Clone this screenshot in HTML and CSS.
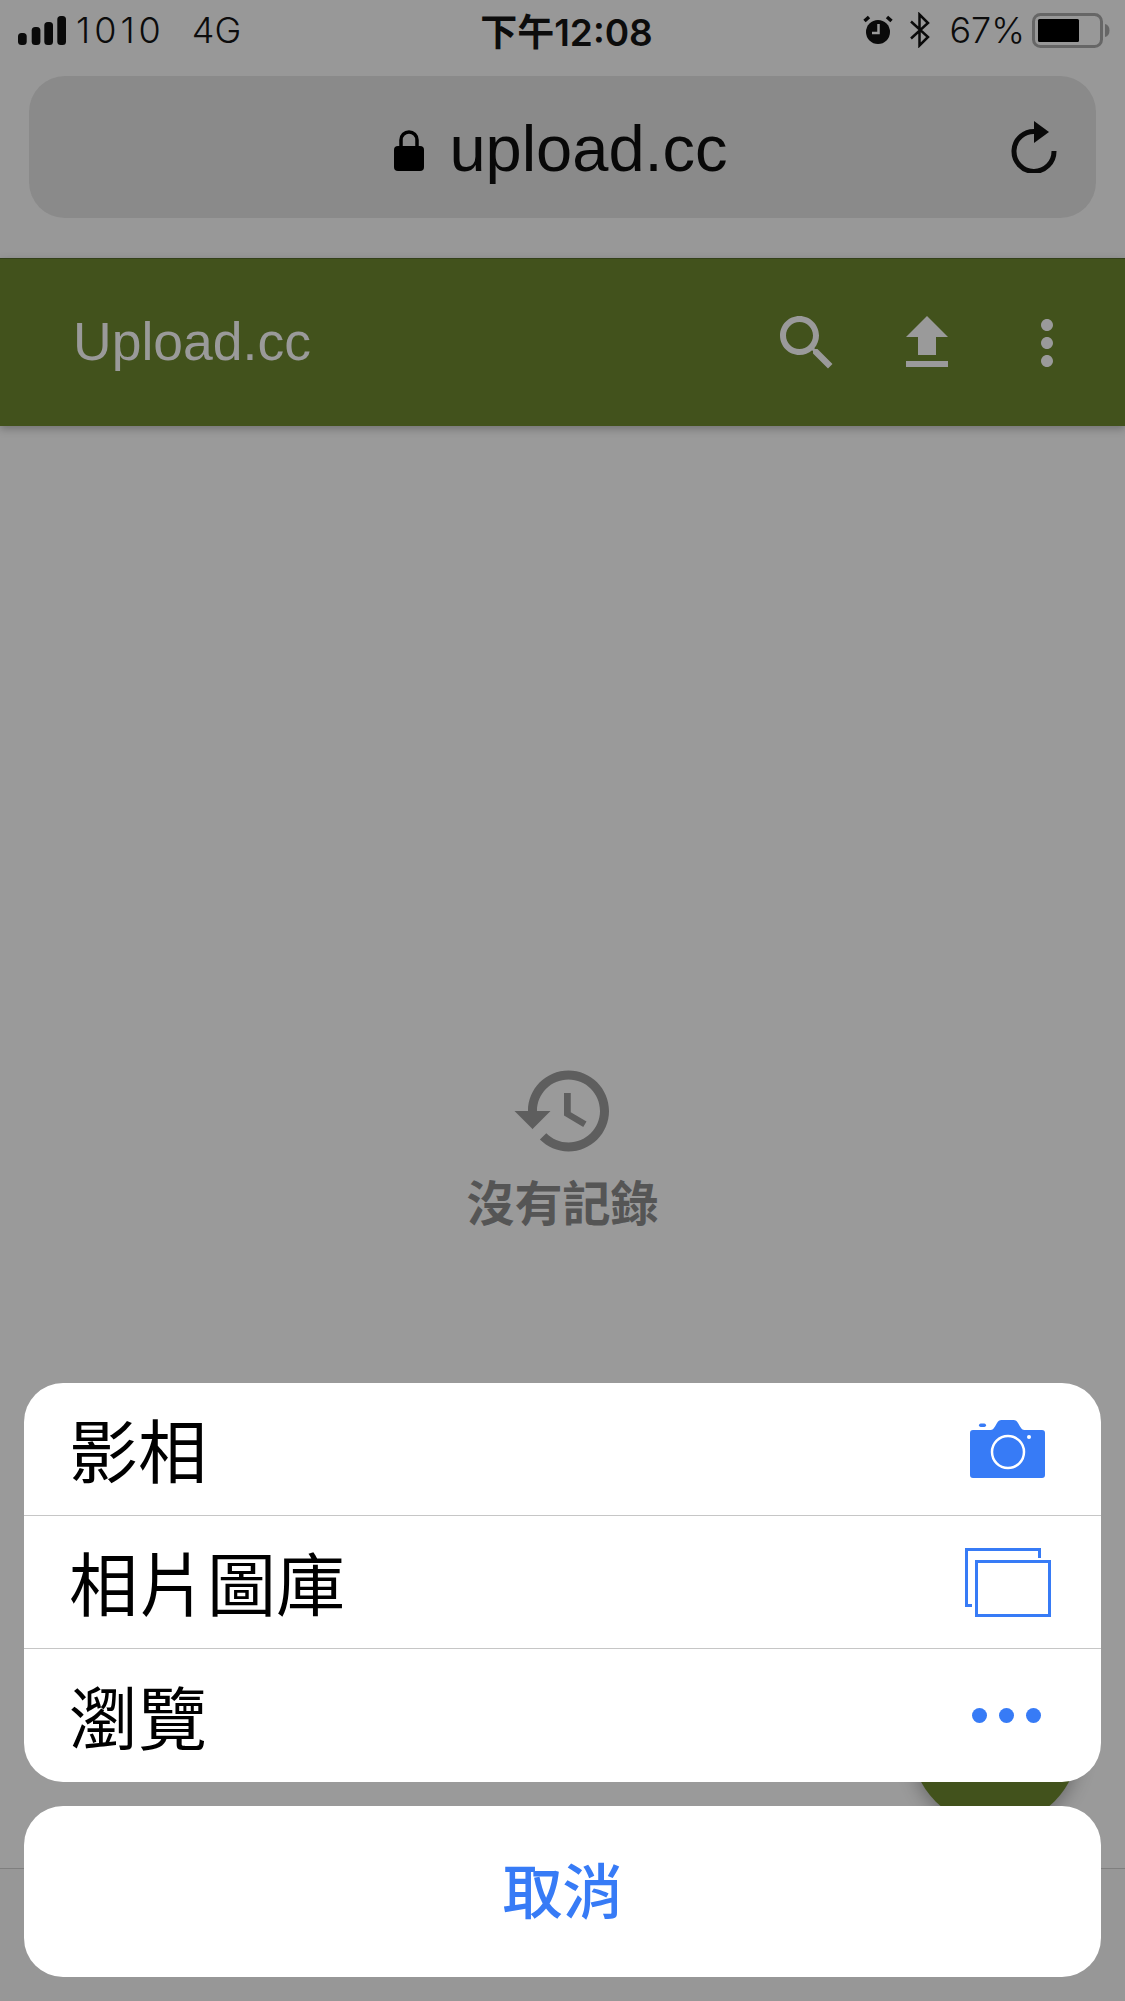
FILE: index.html
```html
<!DOCTYPE html>
<html lang="zh-Hant">
<head>
<meta charset="utf-8">
<title>Upload.cc</title>
<link rel="stylesheet" href="styles.css">
</head>
<body>
<div class="page">
  <div class="browser">
    <div class="status">
      <div class="status-left">
        <svg class="signal" viewBox="0 0 48 29" width="48" height="29"><rect x="0" y="17" width="8.7" height="12" rx="3.5"/><rect x="13.7" y="11" width="8.7" height="18" rx="3.5"/><rect x="26.3" y="6" width="8.7" height="23" rx="3.5"/><rect x="39.3" y="0" width="8.7" height="29" rx="3.5"/></svg>
        <span class="carrier">1010</span>
        <span class="network">4G</span>
      </div>
      <div class="time">下午12:08</div>
      <div class="status-right">
        <svg class="alarm" viewBox="0 0 30 30" width="30" height="30"><circle cx="15" cy="17" r="12"/><path class="alarm-hands" d="M15.5 9v9H9"/><path class="alarm-bells" d="M1.5 6 6 2M28.500 6 24 2"/></svg>
        <svg class="bt" viewBox="0 0 22 36" width="22" height="36"><path d="M2 9.500 19 25 10.500 33.500V2.500L19 11 2 26.500"/></svg>
        <span class="percent">67%</span>
        <svg class="battery" viewBox="0 0 78 35" width="78" height="35"><rect class="batt-shell" x="1.500" y="1.500" width="68" height="32" rx="7"/><rect x="6" y="6" width="41" height="23" rx="1.500"/><path class="batt-nub" d="M73 11c3 .6 4.500 3 4.500 6.500S76 23.400 73 24z"/></svg>
      </div>
    </div>
    <div class="address">
      <div class="address-main">
        <svg class="lock" viewBox="0 0 32 41" width="32" height="41"><path class="lock-shackle" d="M8 19V10a8 8 0 0 1 16 0v9"/><rect x="1" y="16" width="30" height="25" rx="4"/></svg>
        <span class="host">upload.cc</span>
      </div>
      <svg class="reload" viewBox="0 0 46 52" width="46" height="52"><path class="reload-arc" d="M25 10.500A20 20 0 1 0 43 30"/><path d="M23 0 38 11 23 22z"/></svg>
    </div>
  </div>
  <header class="appbar">
    <div class="brand">Upload.cc</div>
    <div class="actions">
      <svg class="icon" viewBox="0 0 24 24" width="72" height="72"><path d="M15.5 14h-.79l-.28-.27C15.41 12.59 16 11.11 16 9.500 16 5.910 13.090 3 9.500 3S3 5.910 3 9.500 5.910 16 9.500 16c1.610 0 3.090-.59 4.230-1.570l.27.28v.79l5 4.990L20.490 19l-4.990-5zm-6 0C7.010 14 5 11.990 5 9.500S7.010 5 9.500 5 14 7.010 14 9.500 11.990 14 9.500 14z"/></svg>
      <svg class="icon" viewBox="0 0 24 24" width="72" height="72"><path d="M9 16h6v-6h4l-7-7-7 7h4zm-4 2h14v2H5z"/></svg>
      <svg class="icon" viewBox="0 0 24 24" width="72" height="72"><path d="M12 8c1.100 0 2-.9 2-2s-.9-2-2-2-2 .9-2 2 .9 2 2 2zm0 2c-1.100 0-2 .9-2 2s.9 2 2 2 2-.9 2-2-.9-2-2-2zm0 6c-1.100 0-2 .9-2 2s.9 2 2 2 2-.9 2-2-.9-2-2-2z"/></svg>
    </div>
  </header>
  <main class="content">
    <svg class="history" viewBox="0 0 24 24" width="108" height="108"><path d="M13 3c-4.970 0-9 4.030-9 9H1l3.890 3.890.07.14L9 12H6c0-3.870 3.130-7 7-7s7 3.130 7 7-3.130 7-7 7c-1.930 0-3.680-.79-4.940-2.060l-1.420 1.420C8.270 19.990 10.510 21 13 21c4.970 0 9-4.030 9-9s-4.030-9-9-9zm-1 5v5l4.280 2.540.72-1.210-3.500-2.080V8H12z"/></svg>
    <div class="empty">沒有記錄</div>
  </main>
  <footer class="footer"></footer>
  <div class="fab"></div>
  <div class="sheet">
    <div class="menu">
      <div class="row">
        <span class="label">影相</span>
        <span class="row-icon">
          <svg class="cam" viewBox="0 0 75 58" width="75" height="58"><path class="blue" d="M3 10h17.500c2 0 3-1 4.500-3.500L27 3c1-1.800 2.500-3 4.500-3h12c2 0 3.500 1.200 4.500 3l2 3.500c1.500 2.500 2.500 3.500 4.500 3.500H72a3 3 0 0 1 3 3v42a3 3 0 0 1-3 3H3a3 3 0 0 1-3-3V13a3 3 0 0 1 3-3z"/><rect class="blue" x="9" y="3.500" width="7" height="3.500" rx="1.700"/><circle class="lens" cx="38" cy="32" r="16"/><circle class="flash" cx="59" cy="17" r="2"/></svg>
        </span>
      </div>
      <div class="row">
        <span class="label">相片圖庫</span>
        <span class="row-icon">
          <svg viewBox="0 0 86 69" width="86" height="69"><path class="outline" d="M74.500 10V1.500H1.500V57.500H7"/><rect class="outline" x="11.500" y="13.500" width="73" height="54"/></svg>
        </span>
      </div>
      <div class="row">
        <span class="label">瀏覽</span>
        <span class="row-icon">
          <svg class="more" viewBox="0 0 69 15" width="69" height="15"><circle class="blue" cx="7.500" cy="7.500" r="7.500"/><circle class="blue" cx="34.500" cy="7.500" r="7.500"/><circle class="blue" cx="61.500" cy="7.500" r="7.500"/></svg>
        </span>
      </div>
    </div>
    <div class="cancel">取消</div>
  </div>
</div>
</body>
</html>
```

FILE: styles.css
```css
* { box-sizing: border-box; }
html, body { margin: 0; padding: 0; }
body { background: #9a9a9a; font-family: "Liberation Sans", "Noto Sans CJK TC", sans-serif; }
.page { position: relative; width: 1125px; height: 2001px; overflow: hidden; display: flex; flex-direction: column; background: #9a9a9a; }

.browser { height: 258px; flex: none; background: #989898; padding: 0 29px; }
.status { height: 76px; margin: 0 -29px; padding: 0 15px 16px 18px; display: grid; grid-template-columns: 1fr auto 1fr; align-items: center; color: #0c0c0c; font-family: "Inter", "Noto Sans CJK TC", sans-serif; font-size: 36px; font-weight: 300; }
.status-left { display: flex; align-items: center; }
.signal { fill: #0a0a0a; margin-right: 10px; }
.carrier { letter-spacing: 4px; margin-right: 27px; }
.time { font-weight: 600; font-size: 37px; padding-left: 5px; }
.status-right { display: flex; align-items: center; justify-content: flex-end; }
.alarm { fill: #0a0a0a; margin-right: 16px; }
.alarm-hands { fill: none; stroke: #9a9a9a; stroke-width: 2.500; }
.alarm-bells { fill: none; stroke: #0a0a0a; stroke-width: 3.500; }
.bt { fill: none; stroke: #0a0a0a; stroke-width: 2.500; margin-right: 18px; }
.percent { margin-right: 7px; }
.battery { fill: #000; }
.batt-shell { fill: none; stroke: #666; stroke-width: 3; }
.batt-nub { fill: #666; }

.address { height: 142px; background: #8a8a8a; border-radius: 36px; display: flex; align-items: center; position: relative; }
.address-main { flex: 1; display: flex; align-items: center; justify-content: center; gap: 24px; padding-left: 81px; }
.lock { fill: #000; flex: none; margin-top: 6px; }
.lock-shackle { fill: none; stroke: #000; stroke-width: 3.500; }
.host { font-size: 65px; line-height: 80px; color: #080808; padding-top: 3px; }
.reload { fill: #0a0a0a; flex: none; margin-right: 39px; }
.reload-arc { fill: none; stroke: #0a0a0a; stroke-width: 5; }

.appbar { height: 168px; flex: none; background: #42521c; border-top: 1px solid #33401a; display: flex; align-items: center; justify-content: space-between; padding: 0 42px 0 73px; box-shadow: 0 3px 8px rgba(0,0,0,.25); position: relative; z-index: 1; }
.brand { font-size: 53.5px; color: #9a9a9a; padding-bottom: 2px; }
.actions { display: flex; gap: 48px; }
.icon { fill: #9a9a9a; display: block; }

.content { flex: 1; display: flex; flex-direction: column; align-items: center; justify-content: center; gap: 5px; padding-bottom: 8px; }
.history { fill: #5e5e5e; display: block; margin-left: 2px; }
.empty { font-size: 48px; line-height: 60px; font-weight: 700; color: #555; font-family: "Noto Sans CJK TC", sans-serif; }

.footer { height: 133px; flex: none; border-top: 1px solid #7f7f7f; background: #979797; }

.fab { position: absolute; left: 911px; top: 1658px; width: 168px; height: 168px; border-radius: 50%; background: #42521c; box-shadow: 0 6px 18px rgba(0,0,0,.3); }

.sheet { position: absolute; left: 24px; right: 24px; top: 1383px; display: flex; flex-direction: column; gap: 24px; font-family: "Noto Sans CJK TC", sans-serif; }
.menu { background: #fff; border-radius: 39px; overflow: hidden; }
.row { height: 133px; display: flex; align-items: center; justify-content: space-between; padding: 0 48px 0 45px; border-top: 1px solid #c6c6c6; }
.row:first-child { height: 132px; border-top: 0; }
.row:last-child { height: 134px; }
.label { font-size: 69px; line-height: 80px; color: #000; padding-bottom: 2px; }
.row-icon { width: 90px; display: flex; justify-content: center; align-items: center; }
.row-icon svg { display: block; flex: none; }
.row-icon .cam { margin-right: 2px; }
.row-icon .more { margin-right: 3px; }
.blue { fill: #377bf6; }
.lens { fill: none; stroke: #fff; stroke-width: 2.500; }
.flash { fill: #fff; }
.outline { fill: none; stroke: #377bf6; stroke-width: 3; }
.cancel { height: 171px; padding-bottom: 8px; background: #fff; border-radius: 39px; display: flex; align-items: center; justify-content: center; font-size: 60px; font-weight: 500; color: #377bf6; }
```
